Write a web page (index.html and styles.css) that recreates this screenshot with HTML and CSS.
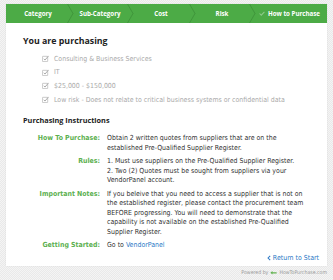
FILE: index.html
```html
<!DOCTYPE html>
<html>
<head>
<meta charset="utf-8">
<link rel="stylesheet" href="styles.css">
</head>
<body>
<div class="page">
  <div class="card">
    <nav class="steps">
      <div class="step s1">Category<svg class="chev" viewBox="0 0 7 19"><polyline points="0.5,0 6,9.5 0.5,19"/></svg></div>
      <div class="step s2">Sub-Category<svg class="chev" viewBox="0 0 7 19"><polyline points="0.5,0 6,9.5 0.5,19"/></svg></div>
      <div class="step s3">Cost<svg class="chev" viewBox="0 0 7 19"><polyline points="0.5,0 6,9.5 0.5,19"/></svg></div>
      <div class="step s4">Risk<svg class="chev" viewBox="0 0 7 19"><polyline points="0.5,0 6,9.5 0.5,19"/></svg></div>
      <div class="step s5"><svg class="tick" viewBox="0 0 8 6"><polyline points="0.8,3 3,5.2 7.2,0.8"/></svg>How to Purchase</div>
    </nav>
    <div class="body">
      <h1 class="title">You are purchasing</h1>
      <ul class="checks">
        <li><svg class="cb" viewBox="0 0 8 8"><rect x="0.5" y="1.5" width="6" height="6" rx="0.5"/><polyline points="2,4.3 3.4,5.8 7.5,1"/></svg>Consulting &amp; Business Services</li>
        <li><svg class="cb" viewBox="0 0 8 8"><rect x="0.5" y="1.5" width="6" height="6" rx="0.5"/><polyline points="2,4.3 3.4,5.8 7.5,1"/></svg>IT</li>
        <li><svg class="cb" viewBox="0 0 8 8"><rect x="0.5" y="1.5" width="6" height="6" rx="0.5"/><polyline points="2,4.3 3.4,5.8 7.5,1"/></svg>$25,000 - $150,000</li>
        <li><svg class="cb" viewBox="0 0 8 8"><rect x="0.5" y="1.5" width="6" height="6" rx="0.5"/><polyline points="2,4.3 3.4,5.8 7.5,1"/></svg>Low risk - Does not relate to critical business systems or confidential data</li>
      </ul>
      <h2 class="subtitle">Purchasing Instructions</h2>
      <dl class="info">
        <dt>How To Purchase:</dt>
        <dd>Obtain 2 written quotes from suppliers that are on the established Pre-Qualified Supplier Register.</dd>
        <dt>Rules:</dt>
        <dd>1. Must use suppliers on the Pre-Qualified Supplier Register.<br>2. Two (2) Quotes must be sought from suppliers via your VendorPanel account.</dd>
        <dt>Important Notes:</dt>
        <dd>If you beleive that you need to access a supplier that is not on the established register, please contact the procurement team BEFORE progressing. You will need to demonstrate that the capability is not available on the established Pre-Qualified Supplier Register.</dd>
        <dt>Getting Started:</dt>
        <dd>Go to <a href="#">VendorPanel</a></dd>
      </dl>
      <div class="back"><a href="#"><svg class="lt" viewBox="0 0 5 7"><polyline points="4,0.8 1.3,3.5 4,6.2"/></svg>Return to Start</a></div>
    </div>
  </div>
  <div class="powered">Powered by <svg class="logo" viewBox="0 0 10 7"><path d="M0.5 4 L3.5 1.5 L3.5 3 L9.5 3 L9.5 5 L3.5 5 L3.5 6.5 Z"/></svg>HowToPurchase.com</div>
</div>
</body>
</html>
```

FILE: styles.css
```css
html, body {
  margin: 0;
  padding: 0;
}
body {
  width: 333px;
  height: 280px;
  overflow: hidden;
  background-color: #efefef;
  background-image: repeating-conic-gradient(#e9e9e9 0 25%, #f4f4f4 0 50%);
  background-size: 2px 2px;
  font-family: "DejaVu Sans Condensed", "DejaVu Sans", sans-serif;
  font-size: 6.95px;
  color: #333;
}
.page {
  padding: 4px 6px 0 6px;
}
.card {
  background: #fff;
  height: 262px;
  box-shadow: 0 0 1px rgba(0,0,0,0.12);
  display: flex;
  flex-direction: column;
}
.steps {
  display: flex;
  height: 19px;
  background: #4cab46;
  color: #fff;
  font-family: "Open Sans", sans-serif;
  font-weight: 700;
  font-size: 6.2px;
}
.step {
  position: relative;
  display: flex;
  align-items: center;
  justify-content: center;
}
.s1 { width: 64px; }
.s2 { width: 60px; }
.s3 { width: 62px; }
.s4 { width: 60px; }
.s5 { flex: 1; }
.chev {
  position: absolute;
  right: -4px;
  top: 0;
  width: 7px;
  height: 19px;
}
.chev polyline {
  fill: none;
  stroke: #3b8d37;
  stroke-width: 0.7;
}
.tick {
  width: 6px;
  height: 5px;
  margin-right: 3px;
}
.tick polyline {
  fill: none;
  stroke: #8fc98a;
  stroke-width: 1.4;
}
.body {
  flex: 1;
  padding: 0 17px 0 17px;
  display: flex;
  flex-direction: column;
}
.title {
  margin: 12px 0 0 0;
  font-family: "Open Sans", sans-serif;
  font-weight: 700;
  font-size: 8.8px;
  line-height: 12px;
  color: #222;
}
.checks {
  list-style: none;
  margin: 5px 0 0 0;
  padding: 0 0 0 19px;
  color: #aaa;
}
.checks li {
  display: flex;
  align-items: center;
  height: 13.6px;
}
.cb {
  width: 7px;
  height: 7px;
  margin-right: 5px;
}
.cb rect {
  fill: none;
  stroke: #b5b5b5;
  stroke-width: 0.8;
}
.cb polyline {
  fill: none;
  stroke: #a8a8a8;
  stroke-width: 1.1;
}
.subtitle {
  margin: 8px 0 0 0;
  font-family: "Open Sans", sans-serif;
  font-weight: 700;
  font-size: 7.3px;
  line-height: 12px;
  color: #222;
}
.info {
  display: grid;
  grid-template-columns: 77px 1fr;
  column-gap: 7px;
  row-gap: 4px;
  margin: 8px 0 0 0;
  line-height: 9.5px;
}
.info dt {
  text-align: right;
  font-weight: 700;
  color: #5cb04f;
}
.info dd {
  margin: 0;
  color: #333;
}
a {
  color: #2c79c6;
  text-decoration: none;
}
.back {
  display: flex;
  justify-content: flex-end;
  margin: 3px -9px 0 0;
  line-height: 9px;
}
.back a {
  display: flex;
  align-items: center;
}
.lt {
  width: 4px;
  height: 6px;
  margin-right: 2px;
}
.lt polyline {
  fill: none;
  stroke: #2c79c6;
  stroke-width: 1.3;
}
.powered {
  display: flex;
  justify-content: flex-end;
  align-items: center;
  margin-top: 2px;
  font-size: 5.2px;
  color: #999;
  line-height: 9px;
}
.logo {
  width: 7px;
  height: 5px;
  margin: 0 2px 0 2px;
}
.logo path {
  fill: #62b24f;
}
```
